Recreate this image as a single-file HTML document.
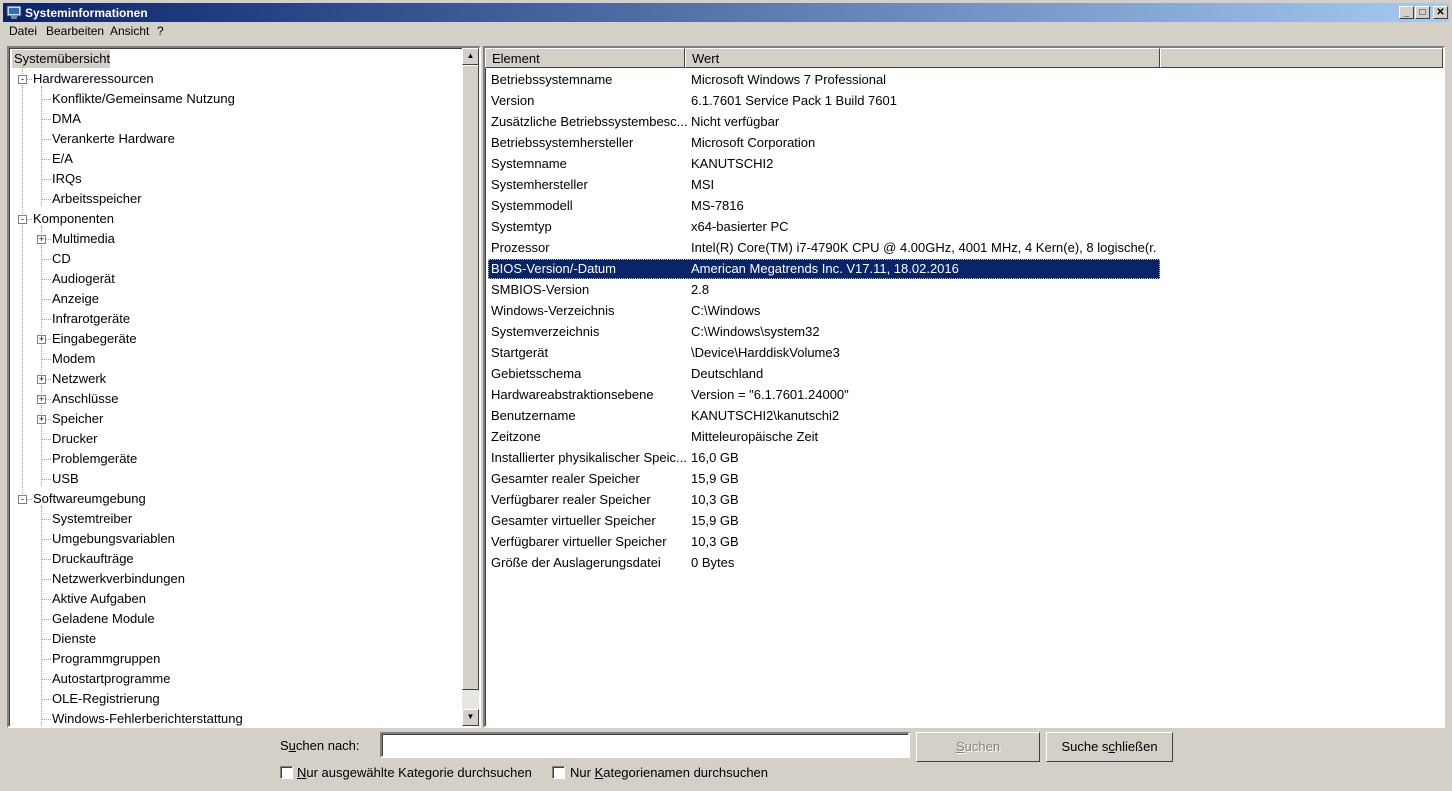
<!DOCTYPE html>
<html><head><meta charset="utf-8"><style>
*{margin:0;padding:0;box-sizing:border-box}
body{width:1452px;height:791px;background:#d4d0c8;font-family:"Liberation Sans",sans-serif;font-size:13px;color:#000;position:relative;overflow:hidden}
.abs{position:absolute}
#title{left:3px;top:3px;width:1446px;height:19px;background:linear-gradient(to right,#0a246a,#a6caf0)}
#title span{position:absolute;left:22px;top:3px;color:#fff;font-weight:bold;font-size:12px}
.tb{position:absolute;top:3px;width:15px;height:13px;background:#d4d0c8;border:1px solid;border-color:#fff #404040 #404040 #fff;font-size:10px;text-align:center;line-height:11px;font-weight:bold}
.menu span{position:absolute;top:24px;font-size:12px}
.sunk{border:2px solid;border-color:#808080 #fff #fff #808080;box-shadow:inset 1px 1px 0 #404040}
#tree{left:7px;top:46px;width:474px;height:682px;background:#fff;overflow:hidden}
#list{left:483px;top:46px;width:962px;height:682px;background:#fff}
.t{position:absolute;white-space:nowrap;line-height:15px}
.box{position:absolute;width:9px;height:9px;border:1px solid #808080;background:#fff;font-size:9px;line-height:7px;text-align:center}
.vl{position:absolute;border-left:1px dotted #a0a0a0;width:0}
.hl{position:absolute;border-top:1px dotted #a0a0a0;height:0}
.r{position:absolute;white-space:nowrap;line-height:15px}
.btn{position:absolute;background:#d4d0c8;border:1px solid;border-color:#fff #404040 #404040 #fff;text-align:center;line-height:28px}
.cb{position:absolute;width:13px;height:13px;background:#fff;border:1px solid;border-color:#808080 #fff #fff #808080;box-shadow:inset 1px 1px 0 #404040}
</style></head><body>
<div id="title" class="abs"><svg class="abs" style="left:3px;top:1px" width="16" height="16"><rect x="1" y="2" width="14" height="10" fill="#cde" stroke="#345"/><rect x="3" y="4" width="10" height="6" fill="#2a6cc0"/><rect x="5" y="12" width="6" height="3" fill="#789"/></svg><span>Systeminformationen</span>
<div class="tb" style="left:1396px">_</div><div class="tb" style="left:1412px">□</div><div class="tb" style="left:1430px">✕</div></div>
<div class="menu"><span style="left:9px">Datei</span><span style="left:46px">Bearbeiten</span><span style="left:110px">Ansicht</span><span style="left:157px">?</span></div>

<div id="tree" class="abs sunk">
<div class="abs" style="left:3px;top:2px;width:98px;height:18px;background:#d4d0c8"></div>
<div class="abs" style="left:453px;top:0;width:17px;height:678px;background:#e8e6e2"></div>
<div class="abs" style="left:453px;top:0;width:17px;height:17px;background:#d4d0c8;border:1px solid;border-color:#fff #404040 #404040 #fff;font-size:8px;text-align:center;line-height:14px">▲</div>
<div class="abs" style="left:453px;top:17px;width:17px;height:625px;background:#d4d0c8;border:1px solid;border-color:#fff #404040 #404040 #fff"></div>
<div class="abs" style="left:453px;top:661px;width:17px;height:17px;background:#d4d0c8;border:1px solid;border-color:#fff #404040 #404040 #fff;font-size:8px;text-align:center;line-height:14px">▼</div>
<div id="tr"></div>
</div>

<div id="list" class="abs sunk">
<div class="abs" style="left:0;top:0;width:200px;height:20px;border:1px solid;border-color:#fff #404040 #404040 #fff;background:#d4d0c8;padding:2px 6px">Element</div>
<div class="abs" style="left:200px;top:0;width:475px;height:20px;border:1px solid;border-color:#fff #404040 #404040 #fff;background:#d4d0c8;padding:2px 6px">Wert</div>
<div class="abs" style="left:675px;top:0;width:283px;height:20px;border:1px solid;border-color:#fff #404040 #404040 #fff;background:#d4d0c8"></div>
<div class="abs" style="left:3px;top:211px;width:672px;height:20px;background:#0a246a;border:1px dotted #c0c0c0"></div>
<div id="lr"></div>
</div>

<div class="r" style="left:280px;top:738px">S<u>u</u>chen nach:</div>
<div class="abs sunk" style="left:380px;top:732px;width:530px;height:26px;background:#fff"></div>
<div class="btn" style="left:916px;top:732px;width:124px;height:30px;color:#808080;text-shadow:1px 1px 0 #fff"><u>S</u>uchen</div>
<div class="btn" style="left:1046px;top:732px;width:127px;height:30px">Suche s<u>c</u>hließen</div>
<div class="cb" style="left:280px;top:766px"></div><div class="r" style="left:297px;top:765px"><u>N</u>ur ausgewählte Kategorie durchsuchen</div>
<div class="cb" style="left:552px;top:766px"></div><div class="r" style="left:570px;top:765px">Nur <u>K</u>ategorienamen durchsuchen</div>

<script>
var T=[[0,"Systemübersicht"],[1,"Hardwareressourcen","-"],[2,"Konflikte/Gemeinsame Nutzung"],[2,"DMA"],[2,"Verankerte Hardware"],[2,"E/A"],[2,"IRQs"],[2,"Arbeitsspeicher"],[1,"Komponenten","-"],[2,"Multimedia","+"],[2,"CD"],[2,"Audiogerät"],[2,"Anzeige"],[2,"Infrarotgeräte"],[2,"Eingabegeräte","+"],[2,"Modem"],[2,"Netzwerk","+"],[2,"Anschlüsse","+"],[2,"Speicher","+"],[2,"Drucker"],[2,"Problemgeräte"],[2,"USB"],[1,"Softwareumgebung","-"],[2,"Systemtreiber"],[2,"Umgebungsvariablen"],[2,"Druckaufträge"],[2,"Netzwerkverbindungen"],[2,"Aktive Aufgaben"],[2,"Geladene Module"],[2,"Dienste"],[2,"Programmgruppen"],[2,"Autostartprogramme"],[2,"OLE-Registrierung"],[2,"Windows-Fehlerberichterstattung"]];
var h="";
h+='<div class="vl" style="left:13px;top:18px;height:432px"></div>';
h+='<div class="vl" style="left:32px;top:38px;height:120px"></div>';
h+='<div class="vl" style="left:32px;top:178px;height:260px"></div>';
h+='<div class="vl" style="left:32px;top:458px;height:220px"></div>';
T.forEach(function(e,i){var y=3+20*i,c=y+8;
 if(e[0]==0)h+='<div class="t" style="left:5px;top:'+y+'px">'+e[1]+'</div>';
 if(e[0]==1){h+='<div class="hl" style="left:13px;top:'+c+'px;width:10px"></div>';h+='<div class="box" style="left:9px;top:'+(c-4)+'px">'+e[2]+'</div>';h+='<div class="t" style="left:24px;top:'+y+'px">'+e[1]+'</div>';}
 if(e[0]==2){h+='<div class="hl" style="left:32px;top:'+c+'px;width:10px"></div>';if(e[2])h+='<div class="box" style="left:28px;top:'+(c-4)+'px">'+e[2]+'</div>';h+='<div class="t" style="left:43px;top:'+y+'px">'+e[1]+'</div>';}
});
document.getElementById("tr").innerHTML=h;
var L=[["Betriebssystemname","Microsoft Windows 7 Professional"],["Version","6.1.7601 Service Pack 1 Build 7601"],["Zusätzliche Betriebssystembesc...","Nicht verfügbar"],["Betriebssystemhersteller","Microsoft Corporation"],["Systemname","KANUTSCHI2"],["Systemhersteller","MSI"],["Systemmodell","MS-7816"],["Systemtyp","x64-basierter PC"],["Prozessor","Intel(R) Core(TM) i7-4790K CPU @ 4.00GHz, 4001 MHz, 4 Kern(e), 8 logische(r..."],["BIOS-Version/-Datum","American Megatrends Inc. V17.11, 18.02.2016"],["SMBIOS-Version","2.8"],["Windows-Verzeichnis","C:\\Windows"],["Systemverzeichnis","C:\\Windows\\system32"],["Startgerät","\\Device\\HarddiskVolume3"],["Gebietsschema","Deutschland"],["Hardwareabstraktionsebene","Version = \"6.1.7601.24000\""],["Benutzername","KANUTSCHI2\\kanutschi2"],["Zeitzone","Mitteleuropäische Zeit"],["Installierter physikalischer Speic...","16,0 GB"],["Gesamter realer Speicher","15,9 GB"],["Verfügbarer realer Speicher","10,3 GB"],["Gesamter virtueller Speicher","15,9 GB"],["Verfügbarer virtueller Speicher","10,3 GB"],["Größe der Auslagerungsdatei","0 Bytes"]];
h="";
L.forEach(function(e,i){var y=24+21*i,s=i==9?"color:#fff;":"";
 h+='<div class="r" style="'+s+'left:6px;top:'+y+'px;max-width:196px;overflow:hidden">'+e[0]+'</div><div class="r" style="'+s+'left:206px;top:'+y+'px;max-width:466px;overflow:hidden">'+e[1]+'</div>';});
document.getElementById("lr").innerHTML=h;
</script>
</body></html>
